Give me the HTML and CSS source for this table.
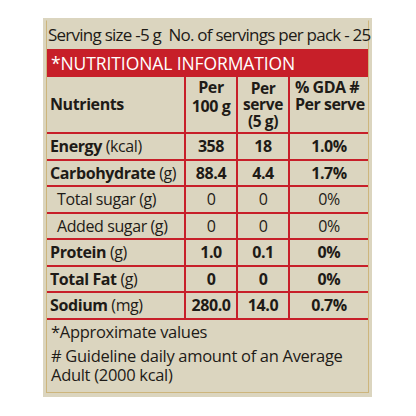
FILE: index.html
```html
<!DOCTYPE html>
<html lang="en">
<head>
    <meta charset="UTF-8">
    <meta name="viewport" content="width=device-width, initial-scale=1.0">
    <title>Nutritional Information</title>
    <link rel="stylesheet" href="styles.css">
</head>
<body>
    <div class="label">
        <div class="frame">
            <p class="serving">Serving size -5 g&nbsp; No. of servings per pack - 25</p>
            <div class="band">*NUTRITIONAL INFORMATION</div>
            <table class="facts">
                <tr class="head">
                    <th class="name">Nutrients</th>
                    <th class="num per100">Per<br>100 g</th>
                    <th class="num">Per<br>serve<br>(5 g)</th>
                    <th class="gda">% GDA #<br>Per serve</th>
                </tr>
                <tr class="main">
                    <td class="name"><b>Energy</b> (kcal)</td>
                    <td>358</td><td>18</td><td>1.0%</td>
                </tr>
                <tr class="main">
                    <td class="name"><b>Carbohydrate</b> (g)</td>
                    <td>88.4</td><td>4.4</td><td>1.7%</td>
                </tr>
                <tr class="sub">
                    <td class="name">Total sugar (g)</td>
                    <td>0</td><td>0</td><td>0%</td>
                </tr>
                <tr class="sub">
                    <td class="name">Added sugar (g)</td>
                    <td>0</td><td>0</td><td>0%</td>
                </tr>
                <tr class="main">
                    <td class="name"><b>Protein</b> (g)</td>
                    <td>1.0</td><td>0.1</td><td>0%</td>
                </tr>
                <tr class="main">
                    <td class="name"><b>Total Fat</b> (g)</td>
                    <td>0</td><td>0</td><td>0%</td>
                </tr>
                <tr class="main">
                    <td class="name"><b>Sodium</b> (mg)</td>
                    <td>280.0</td><td>14.0</td><td>0.7%</td>
                </tr>
            </table>
            <div class="notes">
                <p>*Approximate values</p>
                <p># Guideline daily amount of an Average<br>Adult (2000 kcal)</p>
            </div>
        </div>
    </div>
</body>
</html>
```

FILE: styles.css
```css
body {
    margin: 0;
    background: #fff;
    font-family: "Open Sans", "DejaVu Sans", sans-serif;
    color: #1e1b17;
}

.label {
    margin: 18px 0 0 43px;
    width: 329px;
    height: 379px;
    background: #dbd5bf;
    padding: 2px 3px 4px 3px;
    box-sizing: border-box;
}

.frame {
    height: 100%;
    border: 1px solid #cdb57c;
    border-top-color: #dbd5bf;
    box-sizing: border-box;
}

.serving {
    margin: 0;
    height: 28px;
    line-height: 28px;
    padding-left: 1px;
    font-size: 17px;
    letter-spacing: -0.75px;
    white-space: nowrap;
}

.band {
    background: #c71f29;
    color: #fff;
    height: 28px;
    line-height: 29px;
    padding-left: 4px;
    font-size: 17.5px;
    letter-spacing: -0.1px;
}

.facts {
    width: 100%;
    border-collapse: collapse;
    table-layout: fixed;
}

.facts th,
.facts td {
    border-bottom: 2px solid #c71f29;
    border-left: 2px solid #c71f29;
    padding: 0;
    text-align: center;
    font-size: 16px;
    letter-spacing: -0.4px;
}

.facts tr > :first-child {
    border-left: none;
}

.facts th:nth-child(1) { width: 134px; }
.facts th:nth-child(2) { width: 50px; }
.facts th:nth-child(3) { width: 50px; }

.head th {
    height: 53px;
    font-weight: 700;
    font-size: 15.5px;
    line-height: 16.5px;
}

.head .per100 {
    vertical-align: top;
    padding-top: 1px;
    font-size: 16px;
    line-height: 19px;
}

.head .name,
.facts td.name {
    text-align: left;
    padding-left: 3px;
}

.head .name {
    font-size: 16px;
}

.head .gda {
    text-align: left;
    padding-left: 5px;
    vertical-align: top;
    padding-top: 2px;
    font-size: 16px;
    letter-spacing: -0.5px;
    white-space: nowrap;
}

.facts td {
    height: 24.5px;
    line-height: 20px;
    white-space: nowrap;
}

.main td {
    font-weight: 700;
}

.main td.name {
    font-weight: 400;
}

.sub td.name {
    padding-left: 10px;
}

.notes {
    padding: 2px 0 0 4px;
    font-size: 16.5px;
    letter-spacing: -0.3px;
}

.notes p {
    margin: 0 0 5px;
    line-height: 19px;
}
```
